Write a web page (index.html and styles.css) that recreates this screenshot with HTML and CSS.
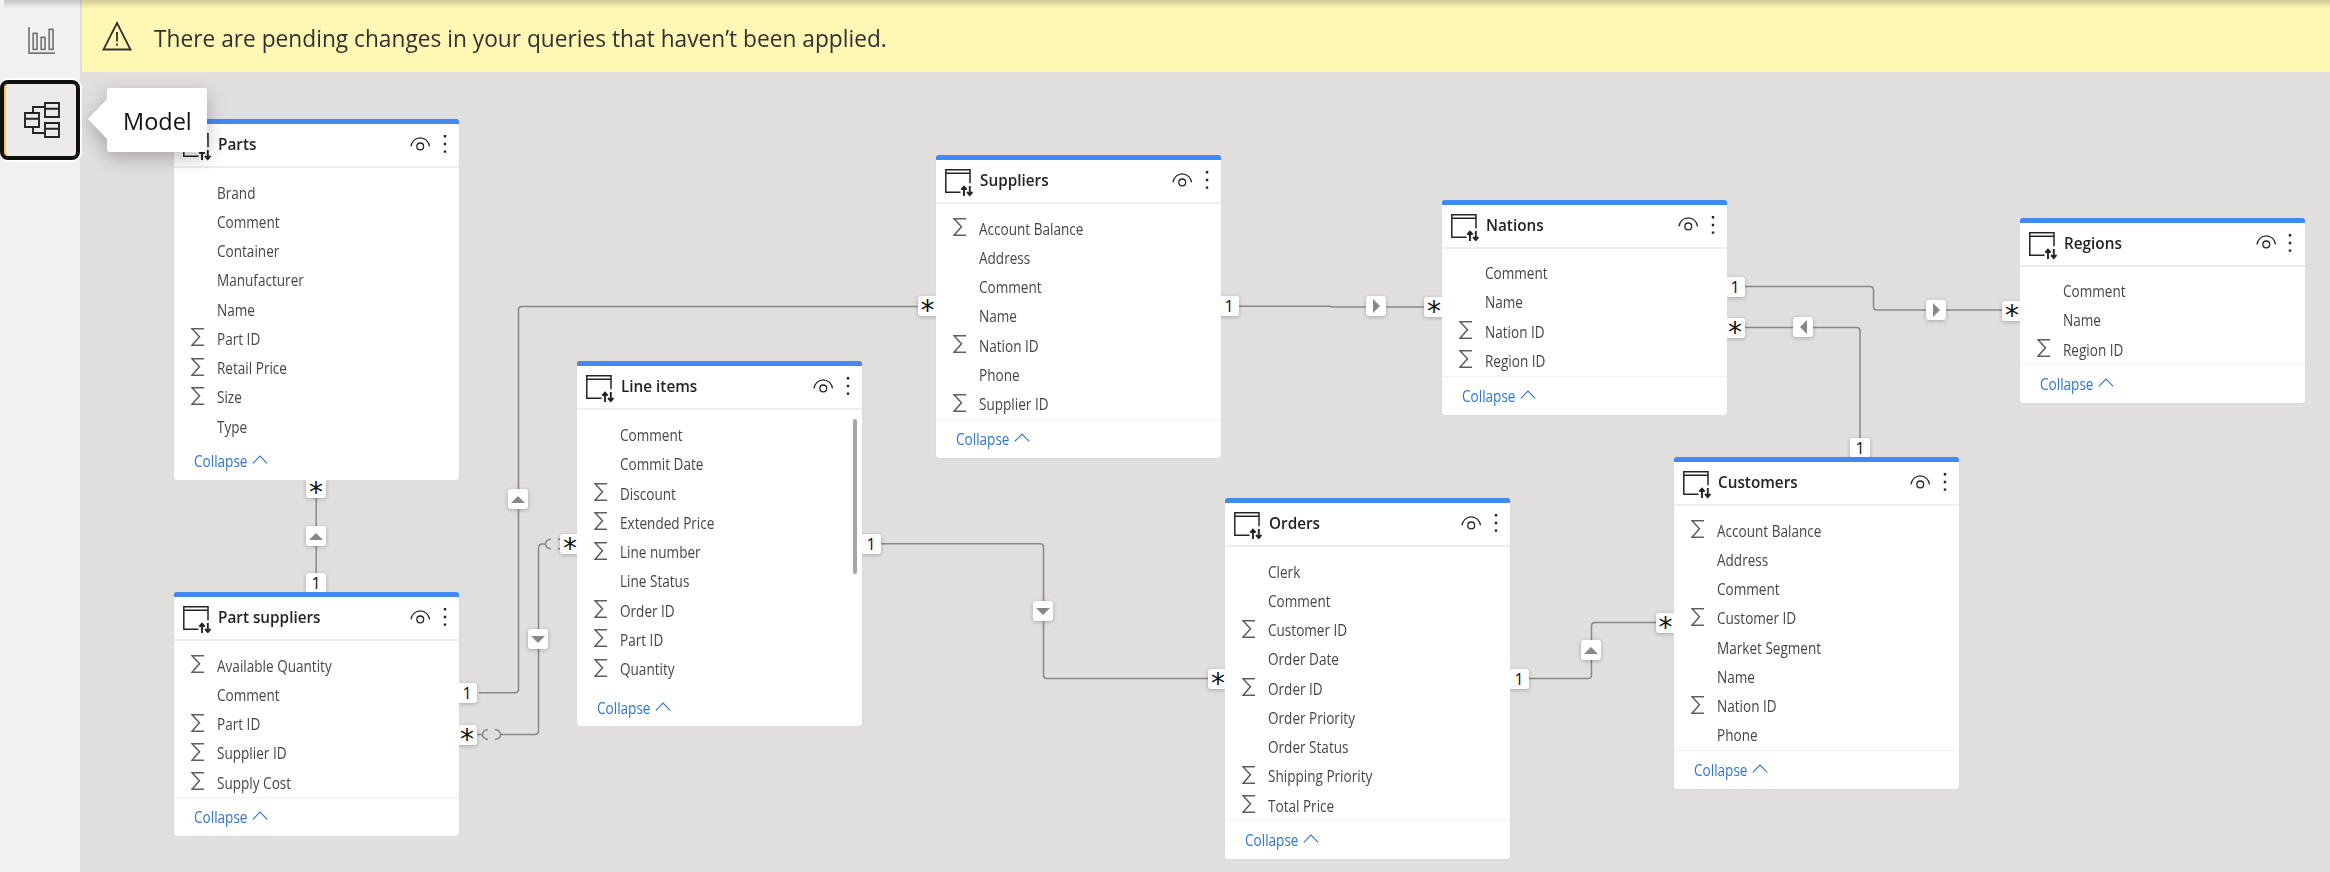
FILE: index.html
```
<!DOCTYPE html>
<html lang="en">
<head>
<meta charset="utf-8">
<title>Model</title>
<link rel="stylesheet" href="styles.css">
</head>
<body>
<svg class="defs" width="0" height="0">
  <symbol id="table" viewBox="0 0 28 28"><g fill="none" stroke="#252423" stroke-width="1.500"><path d="M15.500 23.200H.8V.8H25v13.500M.8 4.300H25"/></g><path fill="none" stroke="#252423" stroke-width="1.900" d="M19 27v-9M16.300 20.600l2.700-3 2.700 3M24.800 17v9M22.100 23l2.700 3 2.700-3"/></symbol>
  <symbol id="eye" viewBox="0 0 20 14"><path fill="none" stroke="#252423" stroke-width="1.300" d="M.7 9.300C1.600 4.200 5.400.8 10 .8s8.400 3.400 9.300 8.500"/><circle cx="10" cy="9.400" r="3.400" fill="none" stroke="#252423" stroke-width="1.300"/></symbol>
  <symbol id="dots" viewBox="0 0 4 20"><path fill="#252423" d="M.8 1h2.400v2.400H.8zM.8 8.800h2.400v2.400H.8zM.8 16.400h2.400v2.400H.8z"/></symbol>
  <symbol id="sum" viewBox="0 0 13 18"><path fill="none" stroke="#605e5c" stroke-width="1.500" d="M13 .8H1L8.500 8.800 1 17.200h12"/></symbol>
  <symbol id="up" viewBox="0 0 16 9"><path fill="none" stroke="#2f74d0" stroke-width="1.100" d="M.8 8.400 8 1l7.200 7.400"/></symbol>
</svg>
<div class="app">
<nav class="rail">
  <div class="rail-item">
    <svg width="28" height="28" viewBox="0 0 28 28" fill="none" stroke="#797775" stroke-width="1.700"><path d="M1 0v26.200h26"/><path d="M5.200 6.400h3.800v16H5.200zM13.200 10.400h3.800v12h-3.800zM21.200 2.400h3.800v20h-3.800z"/></svg>
  </div>
  <div class="rail-item active">
    <svg width="36" height="36" viewBox="0 0 36 36" fill="none" stroke="#252423" stroke-width="1.900"><path d="M1 11h14v14H1zM1 16.800h14M21 1h14v14H21zM21 6.800h14M21 21h14v14H21zM21 26.800h14M9 11V5h12M9 25v6h12"/></svg>
  </div>
</nav>
<main class="main">
  <div class="banner">
    <svg width="30" height="30" viewBox="0 0 30 30" fill="none" stroke="#323130" stroke-width="1.800"><path d="M15 2 28.500 28.500h-27z"/><path d="M15 11v9.500M15 22.500v2.200"/></svg>
    <span class="banner-text">There are pending changes in your queries that haven’t been applied.</span>
  </div>
  <section class="canvas">
    <svg class="lines" width="2330" height="872" viewBox="0 0 2330 872">
      <path d="M316.200 497V575M479 692.700h36q3.500 0 3.500-3.500V310q0-3.500 3.500-3.500H918M545.500 544h-3q-4 0-4 4.500V730.500q0 4-4 4H501M477 734.500h5.500M1238 306.200h92l2 .8H1425M881 543.800h159q3.500 0 3.500 3.500V675q0 3.500 3.500 3.500H1208M1529 678.500h59q3.500 0 3.500-3.500V626q0-3.500 3.500-3.500h62M1745 286.500h125q3.500 0 3.500 3.500v16.500q0 3.500 3.500 3.500H2002M1745 327.500h111.500q3.500 0 3.500 3.500V438"/>
      <path d="M551 539q-5.500 1-5.500 5t5.500 5M558 539q5.500 1 5.500 5t-5.500 5M488 729.500q-5.500 1-5.500 5t5.500 5M495 729.500q5.500 1 5.500 5t-5.500 5"/>
    </svg>
    <i class="end many" style="left:306px;top:478px">*</i>
    <i class="end" style="left:306px;top:573px">1</i>
    <i class="end" style="left:457px;top:683px">1</i>
    <i class="end many" style="left:457px;top:725px">*</i>
    <i class="end many" style="left:560px;top:534px">*</i>
    <i class="end" style="left:861px;top:534px">1</i>
    <i class="end many" style="left:917.500px;top:296px">*</i>
    <i class="end" style="left:1219px;top:296px">1</i>
    <i class="end many" style="left:1424px;top:297px">*</i>
    <i class="end" style="left:1725px;top:277px">1</i>
    <i class="end many" style="left:1725px;top:318px">*</i>
    <i class="end" style="left:1850px;top:438px">1</i>
    <i class="end many" style="left:2002px;top:300.500px">*</i>
    <i class="end many" style="left:1208px;top:669px">*</i>
    <i class="end" style="left:1509px;top:669px">1</i>
    <i class="end many" style="left:1655.500px;top:613px">*</i>
    <i class="end dir n" style="left:306px;top:526px"></i>
    <i class="end dir n" style="left:507.500px;top:489px"></i>
    <i class="end dir s" style="left:528px;top:629px"></i>
    <i class="end dir s" style="left:1033px;top:601px"></i>
    <i class="end dir n" style="left:1581px;top:640px"></i>
    <i class="end dir e" style="left:1366px;top:296px"></i>
    <i class="end dir w" style="left:1793px;top:317px"></i>
    <i class="end dir e" style="left:1926px;top:300px"></i>

    <article class="card" style="left:174px;top:119px">
      <header><svg class="tb"><use href="#table"/></svg><h2>Parts</h2><svg class="eye"><use href="#eye"/></svg><svg class="dots"><use href="#dots"/></svg></header>
      <ul>
        <li><b>Brand</b></li><li><b>Comment</b></li><li><b>Container</b></li><li><b>Manufacturer</b></li><li><b>Name</b></li>
        <li><svg><use href="#sum"/></svg><b>Part ID</b></li><li><svg><use href="#sum"/></svg><b>Retail Price</b></li><li><svg><use href="#sum"/></svg><b>Size</b></li><li><b>Type</b></li>
      </ul>
      <footer class="plain"><b>Collapse</b><svg><use href="#up"/></svg></footer>
    </article>
    <article class="card" style="left:174px;top:592px">
      <header><svg class="tb"><use href="#table"/></svg><h2>Part suppliers</h2><svg class="eye"><use href="#eye"/></svg><svg class="dots"><use href="#dots"/></svg></header>
      <ul>
        <li><svg><use href="#sum"/></svg><b>Available Quantity</b></li><li><b>Comment</b></li><li><svg><use href="#sum"/></svg><b>Part ID</b></li><li><svg><use href="#sum"/></svg><b>Supplier ID</b></li><li><svg><use href="#sum"/></svg><b>Supply Cost</b></li>
      </ul>
      <footer><b>Collapse</b><svg><use href="#up"/></svg></footer>
    </article>
    <article class="card tall" style="left:577px;top:361px">
      <header><svg class="tb"><use href="#table"/></svg><h2>Line items</h2><svg class="eye"><use href="#eye"/></svg><svg class="dots"><use href="#dots"/></svg></header>
      <ul>
        <li><b>Comment</b></li><li><b>Commit Date</b></li><li><svg><use href="#sum"/></svg><b>Discount</b></li><li><svg><use href="#sum"/></svg><b>Extended Price</b></li><li><svg><use href="#sum"/></svg><b>Line number</b></li><li><b>Line Status</b></li><li><svg><use href="#sum"/></svg><b>Order ID</b></li><li><svg><use href="#sum"/></svg><b>Part ID</b></li><li><svg><use href="#sum"/></svg><b>Quantity</b></li>
      </ul>
      <span class="thumb"></span>
      <footer class="plain"><b>Collapse</b><svg><use href="#up"/></svg></footer>
    </article>
    <article class="card" style="left:936px;top:155px">
      <header><svg class="tb"><use href="#table"/></svg><h2>Suppliers</h2><svg class="eye"><use href="#eye"/></svg><svg class="dots"><use href="#dots"/></svg></header>
      <ul>
        <li><svg><use href="#sum"/></svg><b>Account Balance</b></li><li><b>Address</b></li><li><b>Comment</b></li><li><b>Name</b></li><li><svg><use href="#sum"/></svg><b>Nation ID</b></li><li><b>Phone</b></li><li><svg><use href="#sum"/></svg><b>Supplier ID</b></li>
      </ul>
      <footer><b>Collapse</b><svg><use href="#up"/></svg></footer>
    </article>
    <article class="card" style="left:1442px;top:199.500px">
      <header><svg class="tb"><use href="#table"/></svg><h2>Nations</h2><svg class="eye"><use href="#eye"/></svg><svg class="dots"><use href="#dots"/></svg></header>
      <ul>
        <li><b>Comment</b></li><li><b>Name</b></li><li><svg><use href="#sum"/></svg><b>Nation ID</b></li><li><svg><use href="#sum"/></svg><b>Region ID</b></li>
      </ul>
      <footer><b>Collapse</b><svg><use href="#up"/></svg></footer>
    </article>
    <article class="card" style="left:2019.500px;top:217.500px">
      <header><svg class="tb"><use href="#table"/></svg><h2>Regions</h2><svg class="eye"><use href="#eye"/></svg><svg class="dots"><use href="#dots"/></svg></header>
      <ul>
        <li><b>Comment</b></li><li><b>Name</b></li><li><svg><use href="#sum"/></svg><b>Region ID</b></li>
      </ul>
      <footer><b>Collapse</b><svg><use href="#up"/></svg></footer>
    </article>
    <article class="card" style="left:1225px;top:498px">
      <header><svg class="tb"><use href="#table"/></svg><h2>Orders</h2><svg class="eye"><use href="#eye"/></svg><svg class="dots"><use href="#dots"/></svg></header>
      <ul>
        <li><b>Clerk</b></li><li><b>Comment</b></li><li><svg><use href="#sum"/></svg><b>Customer ID</b></li><li><b>Order Date</b></li><li><svg><use href="#sum"/></svg><b>Order ID</b></li><li><b>Order Priority</b></li><li><b>Order Status</b></li><li><svg><use href="#sum"/></svg><b>Shipping Priority</b></li><li><svg><use href="#sum"/></svg><b>Total Price</b></li>
      </ul>
      <footer><b>Collapse</b><svg><use href="#up"/></svg></footer>
    </article>
    <article class="card" style="left:1674px;top:457px">
      <header><svg class="tb"><use href="#table"/></svg><h2>Customers</h2><svg class="eye"><use href="#eye"/></svg><svg class="dots"><use href="#dots"/></svg></header>
      <ul>
        <li><svg><use href="#sum"/></svg><b>Account Balance</b></li><li><b>Address</b></li><li><b>Comment</b></li><li><svg><use href="#sum"/></svg><b>Customer ID</b></li><li><b>Market Segment</b></li><li><b>Name</b></li><li><svg><use href="#sum"/></svg><b>Nation ID</b></li><li><b>Phone</b></li>
      </ul>
      <footer><b>Collapse</b><svg><use href="#up"/></svg></footer>
    </article>
    <div class="tip">Model</div>
  </section>
</main>
</div>
</body>
</html>
```
FILE: styles.css
```
* { box-sizing: border-box; }
body { margin: 0; font-family: "Open Sans", "Noto Sans", sans-serif; color: #252423; overflow: hidden; }
.defs { position: absolute; }
.app { position: relative; display: flex; width: 2330px; height: 872px; background: #e0dfdd; overflow: hidden; }
.app::after { content: ""; position: absolute; left: 4px; right: 0; top: 0; height: 9px; background: linear-gradient(rgba(0,0,0,.18), rgba(0,0,0,0)); }
.rail { width: 80px; background: #f3f2f1; flex: none; }
.rail-item { height: 80px; display: flex; align-items: center; justify-content: center; padding: 1px 0 0 3px; }
.rail-item.active { border: 4px solid #111; border-radius: 8px; background: #edebe9; box-shadow: inset 2px 0 #f2c84b, 0 0 0 2px #fff; padding: 0 0 0 4px; }
.main { flex: 1; padding-left: 2px; }
.banner { height: 72px; background: #fff8b5; display: flex; align-items: center; padding: 3px 0 0 20px; gap: 22px; }
.banner svg { margin-top: -4px; }
.banner-text { font-size: 23.400px; color: #323130; white-space: nowrap; transform: scaleX(.971); transform-origin: left; }
.canvas { position: absolute; inset: 0; }
.lines { position: absolute; left: 0; top: 0; fill: none; stroke: #8a8886; stroke-width: 1.500; }
.card { position: absolute; width: 285px; background: #fff; border-radius: 3px; border-top: 5px solid #4189f5; box-shadow: 0 0 1px rgba(0,0,0,.15); }
.card header { height: 44px; border-bottom: 2px solid #efeeed; display: flex; align-items: center; padding: 0 12.500px 0 9px; }
.tb { width: 28px; height: 28px; margin-top: 4px; }
.card h2 { flex: 1; margin: 0 0 2px 7px; font-size: 16.300px; font-weight: 600; white-space: nowrap; transform: scaleX(.94); transform-origin: left; }
.eye { width: 20.500px; height: 14px; margin: -3px 12px 0 0; }
.dots { width: 4px; height: 20px; margin-top: -2px; }
.card ul { list-style: none; margin: 0; padding: 10px 0 0 17px; }
.card li { height: 29.250px; display: flex; align-items: center; position: relative; padding-left: 26px; }
.card li svg { width: 13px; height: 18px; margin: -3px 13px 0 -26px; }
.card b { font-weight: 400; font-size: 15.500px; color: #484644; white-space: nowrap; transform: scaleX(.875); transform-origin: left; }
.card footer { height: 39px; border-top: 1px solid #f3f2f1; display: flex; align-items: center; padding-left: 20px; }
.card footer.plain { border-color: transparent; }
.card footer b { color: #2f74d0; width: 58px; }
.card footer svg { width: 16px; height: 9px; margin-top: -3px; }
.tall ul { padding-top: 10.500px; }
.tall footer { height: 42.500px; padding-top: 4px; }
.thumb { position: absolute; right: 5px; top: 53px; width: 4px; height: 155px; border-radius: 2px; background: #a6a6a6; }
.end { position: absolute; width: 20px; height: 20px; border-radius: 3px; background: #fff; box-shadow: 0 1px 4px rgba(0,0,0,.25); display: flex; align-items: center; justify-content: center; font: 500 16px/20px "Open Sans", sans-serif; color: #111; }
.many { font: 400 28px/20px "DejaVu Sans", sans-serif; padding-top: 10px; }
.dir::before { content: ""; border: 7.500px solid transparent; }
.n::before { border-bottom-color: #8a8886; border-top-width: 0; }
.s::before { border-top-color: #8a8886; border-bottom-width: 0; }
.e::before { border-left-color: #8a8886; border-right-width: 0; }
.w::before { border-right-color: #8a8886; border-left-width: 0; }
.tip { position: absolute; left: 107px; top: 88px; width: 100px; height: 64px; background: #fff; border-radius: 3px; display: flex; align-items: center; padding: 2px 0 0 16px; font-size: 23.500px; color: #111; filter: drop-shadow(0 6px 9px rgba(0,0,0,.25)); }
.tip::before { content: ""; position: absolute; left: -19px; top: 11px; border: 20px solid transparent; border-right: 19px solid #fff; border-left: 0; }
```
